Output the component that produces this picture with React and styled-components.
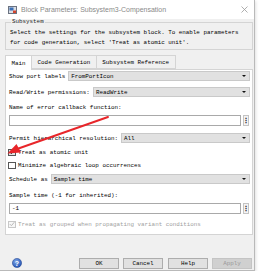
import React from "react";
import styled, { createGlobalStyle } from "styled-components";

const MONO = `"Liberation Mono", "DejaVu Sans Mono", monospace`;

const GlobalStyle = createGlobalStyle`
  html, body {
    margin: 0;
    background: #ffffff;
  }
`;

const AppIcon = () => (
  <svg width="9" height="8" viewBox="0 0 9 8">
    <rect x="0.5" y="0.5" width="8" height="7" fill="#d9dde4" stroke="#6b7280" />
    <rect x="1.5" y="1.5" width="4" height="3" fill="#3a6fb5" />
    <rect x="5" y="4.5" width="3" height="2.5" fill="#d2452e" />
  </svg>
);

const CloseIcon = () => (
  <svg width="7" height="7" viewBox="0 0 7 7">
    <path d="M0.5 0.5 L6.5 6.5 M6.5 0.5 L0.5 6.5" stroke="#9a9a9a" strokeWidth="0.8" />
  </svg>
);

const HelpIcon = () => (
  <svg width="10" height="10" viewBox="0 0 10 10">
    <defs>
      <radialGradient id="hg" cx="0.4" cy="0.35" r="0.7">
        <stop offset="0" stopColor="#7fa6e8" />
        <stop offset="1" stopColor="#1f4fb0" />
      </radialGradient>
    </defs>
    <circle cx="5" cy="5" r="4.6" fill="url(#hg)" stroke="#1b3f8c" strokeWidth="0.5" />
    <text x="5" y="7.6" textAnchor="middle" fontSize="7" fontWeight="bold" fill="#ffffff" fontFamily="Liberation Sans, sans-serif">?</text>
  </svg>
);

const RedArrow = () => (
  <ArrowLayer width="259" height="277" viewBox="0 0 259 277">
    <line x1="108" y1="117" x2="17" y2="149" stroke="#e8262a" strokeWidth="1.9" strokeLinecap="round" />
    <polygon points="7.5,153.5 21,152.5 16.5,144" fill="#e8262a" />
  </ArrowLayer>
);

const Select = ({ value }) => (
  <SelectBox>
    <span>{value}</span>
    <Caret />
  </SelectBox>
);

const Check = ({ checked, disabled }) => (
  <Box checked={checked} disabled={disabled}>
    {checked && (
      <svg width="6" height="6" viewBox="0 0 6 6">
        <path d="M0.8 3.1 L2.4 4.7 L5.3 1.2" fill="none" stroke={disabled ? "#b8b8b8" : "#222"} strokeWidth="1" />
      </svg>
    )}
  </Box>
);

const App = () => {
  return (
    <>
      <GlobalStyle />
      <Window>
        <TitleBar>
          <AppIcon />
          <Title>Block Parameters: Subsystem3-Compensation</Title>
          <CloseButton>
            <CloseIcon />
          </CloseButton>
        </TitleBar>

        <Body>
          <Group>
            <Legend>Subsystem</Legend>
            <Desc>
              Select the settings for the subsystem block. To enable parameters
              <br />
              for code generation, select 'Treat as atomic unit'.
            </Desc>
          </Group>

          <Tabs>
            <Tab active>Main</Tab>
            <Tab>Code Generation</Tab>
            <Tab>Subsystem Reference</Tab>
          </Tabs>

          <Panel>
            <Row mt={1}>
              <Label>Show port labels</Label>
              <Select value="FromPortIcon" />
            </Row>
            <Row mt={6}>
              <Label>Read/Write permissions:</Label>
              <Select value="ReadWrite" />
            </Row>
            <Row mt={5}>
              <Label>Name of error callback function:</Label>
            </Row>
            <FieldRow mt={3}>
              <TextField />
              <DotsButton>⋮</DotsButton>
            </FieldRow>
            <Row mt={7}>
              <Label>Permit hierarchical resolution:</Label>
              <Select value="All" />
            </Row>
            <CheckRow mt={4}>
              <Check checked />
              <Label>Treat as atomic unit</Label>
            </CheckRow>
            <CheckRow mt={3}>
              <Check />
              <Label>Minimize algebraic loop occurrences</Label>
            </CheckRow>
            <Row mt={4}>
              <Label>Schedule as</Label>
              <Select value="Sample time" />
            </Row>
            <Row mt={6}>
              <Label>Sample time (-1 for inherited):</Label>
            </Row>
            <FieldRow mt={3}>
              <TextField>-1</TextField>
              <DotsButton>⋮</DotsButton>
            </FieldRow>
            <CheckRow mt={5}>
              <Check checked disabled />
              <Label muted>Treat as grouped when propagating variant conditions</Label>
            </CheckRow>
          </Panel>
        </Body>

        <Footer>
          <HelpSpot>
            <HelpIcon />
          </HelpSpot>
          <Buttons>
            <Button>OK</Button>
            <Button>Cancel</Button>
            <Button wide>Help</Button>
            <Button disabled>Apply</Button>
          </Buttons>
        </Footer>

        <RedArrow />
      </Window>
    </>
  );
};

export default App;

// -------------------- Styles --------------------
const Window = styled.div`
  position: relative;
  box-sizing: border-box;
  width: 255px;
  height: 271px;
  border: 1px solid #b9b9b9;
  border-left: none;
  border-top: none;
  background: #f0f0f0;
  display: flex;
  flex-direction: column;
  box-shadow: 1px 1px 3px rgba(0, 0, 0, 0.12);
`;

const TitleBar = styled.div`
  height: 19px;
  flex: none;
  background: #ffffff;
  display: flex;
  align-items: center;
  padding-left: 8px;
  gap: 4px;
`;

const Title = styled.div`
  font-family: "Liberation Sans", Arial, sans-serif;
  font-size: 7px;
  color: #8a8a8a;
  white-space: nowrap;
`;

const CloseButton = styled.div`
  margin-left: auto;
  margin-right: 6px;
  display: flex;
`;

const Body = styled.div`
  display: flex;
  flex-direction: column;
  padding: 0 1px 0 5px;
`;

const Group = styled.fieldset`
  margin: 0;
  min-width: 0;
  padding: 3px 4px 1px;
  border: 1px solid #d4d4d4;
`;

const Legend = styled.legend`
  font-family: ${MONO};
  font-size: 5.87px;
  line-height: 6px;
  color: #222;
  padding: 0 1px;
  margin-left: 1px;
`;

const Desc = styled.div`
  font-family: ${MONO};
  font-size: 5.87px;
  line-height: 10px;
  color: #000;
  white-space: nowrap;
`;

const Tabs = styled.div`
  display: flex;
  margin-top: 5px;
  height: 14px;
`;

const Tab = styled.div`
  box-sizing: border-box;
  height: ${({ active }) => (active ? "15px" : "14px")};
  margin-bottom: ${({ active }) => (active ? "-1px" : "0")};
  position: relative;
  z-index: ${({ active }) => (active ? 1 : 0)};
  display: flex;
  align-items: center;
  padding: 0 5.5px;
  border: 1px solid #d4d4d4;
  border-left: ${({ active }) => (active ? "1px solid #d4d4d4" : "none")};
  border-bottom: ${({ active }) => (active ? "none" : "1px solid #d4d4d4")};
  background: ${({ active }) => (active ? "#ffffff" : "#f0f0f0")};
  font-family: ${MONO};
  font-size: 5.87px;
  color: #000;
  white-space: nowrap;
`;

const Panel = styled.div`
  box-sizing: border-box;
  height: 166px;
  background: #ffffff;
  border: 1px solid #d4d4d4;
  display: flex;
  flex-direction: column;
  padding: 0 2px 0 3px;
`;

const Row = styled.div`
  display: flex;
  align-items: center;
  height: 10px;
  gap: 3px;
  margin-top: ${({ mt }) => mt}px;
`;

const CheckRow = styled(Row)`
  gap: 2px;
  margin-left: -1px;
`;

const FieldRow = styled(Row)`
  height: 11px;
  gap: 2px;
  padding-right: 1px;
`;

const Label = styled.span`
  font-family: ${MONO};
  font-size: 5.87px;
  color: ${({ muted }) => (muted ? "#a0a0a0" : "#000")};
  white-space: nowrap;
`;

const SelectBox = styled.div`
  box-sizing: border-box;
  flex: 1;
  height: 10px;
  display: flex;
  align-items: center;
  padding: 0 3px 0 2px;
  background: #e1e1e1;
  border: 1px solid #c9c9c9;
  font-family: ${MONO};
  font-size: 5.87px;
  color: #000;
  white-space: nowrap;
`;

const Caret = styled.span`
  margin-left: auto;
  width: 0;
  height: 0;
  border-left: 2px solid transparent;
  border-right: 2px solid transparent;
  border-top: 2.5px solid #111;
`;

const TextField = styled.div`
  box-sizing: border-box;
  flex: 1;
  height: 11px;
  display: flex;
  align-items: center;
  padding-left: 2px;
  background: #ffffff;
  border: 1px solid #a9a9a9;
  font-family: ${MONO};
  font-size: 5.87px;
  color: #000;
`;

const DotsButton = styled.div`
  box-sizing: border-box;
  width: 6px;
  height: 11px;
  display: flex;
  align-items: center;
  justify-content: center;
  border: 1px solid #c4c4c4;
  background: #f4f4f4;
  font-family: "DejaVu Sans", sans-serif;
  font-size: 7px;
  font-weight: bold;
  color: #333;
`;

const Box = styled.div`
  box-sizing: border-box;
  width: 8px;
  height: 7px;
  display: flex;
  align-items: center;
  justify-content: center;
  border: 1px solid ${({ disabled }) => (disabled ? "#c8c8c8" : "#555")};
  background: ${({ checked, disabled }) =>
    disabled ? "#f7f7f7" : checked ? "#e4e4e4" : "#ffffff"};
`;

const Footer = styled.div`
  flex: 1;
  display: flex;
  align-items: flex-end;
  padding: 0 2px 1px 12px;
`;

const HelpSpot = styled.div`
  display: flex;
  margin-bottom: 1px;
`;

const Buttons = styled.div`
  margin-left: auto;
  display: flex;
  gap: 4px;
`;

const Button = styled.div`
  box-sizing: border-box;
  width: 40px;
  height: 11px;
  display: flex;
  align-items: center;
  justify-content: center;
  background: ${({ disabled }) => (disabled ? "#d0d0d0" : "#e1e1e1")};
  border: 1px solid ${({ disabled }) => (disabled ? "#c4c4c4" : "#adadad")};
  font-family: ${MONO};
  font-size: 5.87px;
  color: ${({ disabled }) => (disabled ? "#9a9a9a" : "#000")};
  margin-left: ${({ wide }) => (wide ? "1px" : "0")};
`;

const ArrowLayer = styled.svg`
  position: absolute;
  left: 0;
  top: 0;
  pointer-events: none;
`;
